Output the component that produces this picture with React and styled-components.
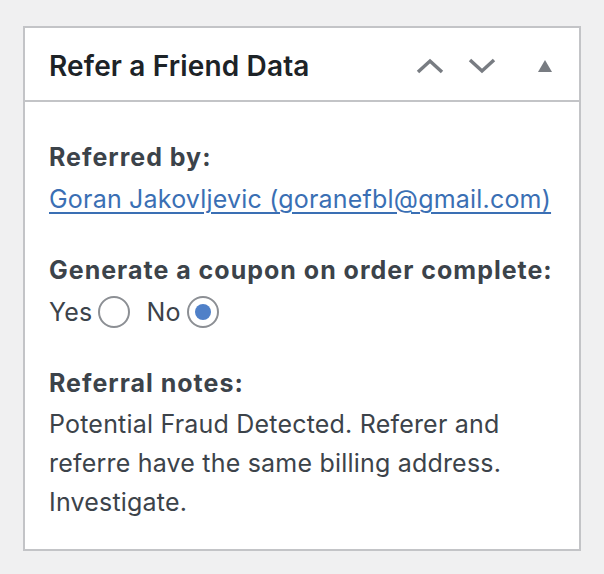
import React from 'react';
import styled, { createGlobalStyle } from 'styled-components';

const GlobalStyle = createGlobalStyle`
  html, body {
    margin: 0;
    padding: 0;
    background: #f0f0f1;
  }
  body {
    font-family: Inter, "Noto Sans", sans-serif;
    color: #3c434a;
  }
`;

const Page = styled.div`
  padding: 26px 22px 25px 23px;
`;

const Box = styled.div`
  background: #fff;
  border: 2px solid #c3c4c7;
  width: 554px;
  box-sizing: content-box;
`;

const Header = styled.div`
  display: flex;
  align-items: center;
  height: 74px;
  border-bottom: 2px solid #c3c4c7;
  padding: 3px 18px 0 24px;
  box-sizing: border-box;
`;

const Title = styled.h2`
  flex: 1;
  margin: 0;
  font-size: 28px;
  font-weight: 600;
  color: #1d2327;
  letter-spacing: 0.15px;
`;

const Handles = styled.div`
  display: flex;
  align-items: center;
  gap: 20px;
`;

const HandleButton = styled.span`
  display: flex;
  align-items: center;
  justify-content: center;
  width: 32px;
  height: 32px;
  margin-left: ${p => p.$shift || 0}px;
  color: #787c82;
`;

const Inside = styled.div`
  padding: 35px 24px 27px;
`;

const Section = styled.div`
  margin-bottom: 31px;
  &:last-child {
    margin-bottom: 0;
  }
`;

const Label = styled.div`
  font-size: 25px;
  font-weight: 700;
  line-height: 40px;
  letter-spacing: 1px;
  white-space: nowrap;
  margin-bottom: 2px;
  color: #3c434a;
`;

const Line = styled.div`
  font-size: 25px;
  line-height: 40px;
  letter-spacing: 0.2px;
  white-space: nowrap;
`;

const PersonLink = styled.a`
  color: #3a6fb4;
  text-decoration: underline;
  text-underline-offset: 4px;
  text-decoration-thickness: 1.5px;
`;

const RadioRow = styled.div`
  display: flex;
  align-items: center;
  font-size: 25px;
  line-height: 40px;
  letter-spacing: 0.2px;
`;

const RadioLabel = styled.label`
  display: flex;
  align-items: center;
  gap: 6px;
  margin-right: 16px;
`;

const Radio = styled.span`
  width: 28px;
  height: 28px;
  border: 2px solid #8c8f94;
  border-radius: 50%;
  display: flex;
  align-items: center;
  justify-content: center;
  background: #fff;
  &::after {
    content: '';
    display: ${p => (p.$checked ? 'block' : 'none')};
    width: 16px;
    height: 16px;
    border-radius: 50%;
    background: #4f80c8;
  }
`;

const Notes = styled.p`
  margin: 0;
  font-size: 25px;
  line-height: 39px;
  letter-spacing: 0.2px;
`;

function ChevronUp() {
  return (
    <svg width="28" height="18" viewBox="0 0 28 18">
      <path d="M2 15 L14 4 L26 15" fill="none" stroke="currentColor" strokeWidth="3.5" />
    </svg>
  );
}

function ChevronDown() {
  return (
    <svg width="28" height="18" viewBox="0 0 28 18">
      <path d="M2 3 L14 14 L26 3" fill="none" stroke="currentColor" strokeWidth="3.5" />
    </svg>
  );
}

function Triangle() {
  return (
    <svg width="16" height="14" viewBox="0 0 16 14">
      <path d="M8 1 L15 13 L1 13 Z" fill="currentColor" />
    </svg>
  );
}

export default function App() {
  return (
    <>
      <GlobalStyle />
      <Page>
        <Box>
          <Header>
            <Title>Refer a Friend Data</Title>
            <Handles>
              <HandleButton><ChevronUp /></HandleButton>
              <HandleButton><ChevronDown /></HandleButton>
              <HandleButton $shift={11}><Triangle /></HandleButton>
            </Handles>
          </Header>
          <Inside>
            <Section>
              <Label>Referred by:</Label>
              <Line>
                <PersonLink href="#">Goran Jakovljevic (goranefbl@gmail.com)</PersonLink>
              </Line>
            </Section>
            <Section>
              <Label>Generate a coupon on order complete:</Label>
              <RadioRow>
                <RadioLabel>Yes <Radio /></RadioLabel>
                <RadioLabel>No <Radio $checked /></RadioLabel>
              </RadioRow>
            </Section>
            <Section>
              <Label>Referral notes:</Label>
              <Notes>
                Potential Fraud Detected. Referer and referre have the same billing address. Investigate.
              </Notes>
            </Section>
          </Inside>
        </Box>
      </Page>
    </>
  );
}
